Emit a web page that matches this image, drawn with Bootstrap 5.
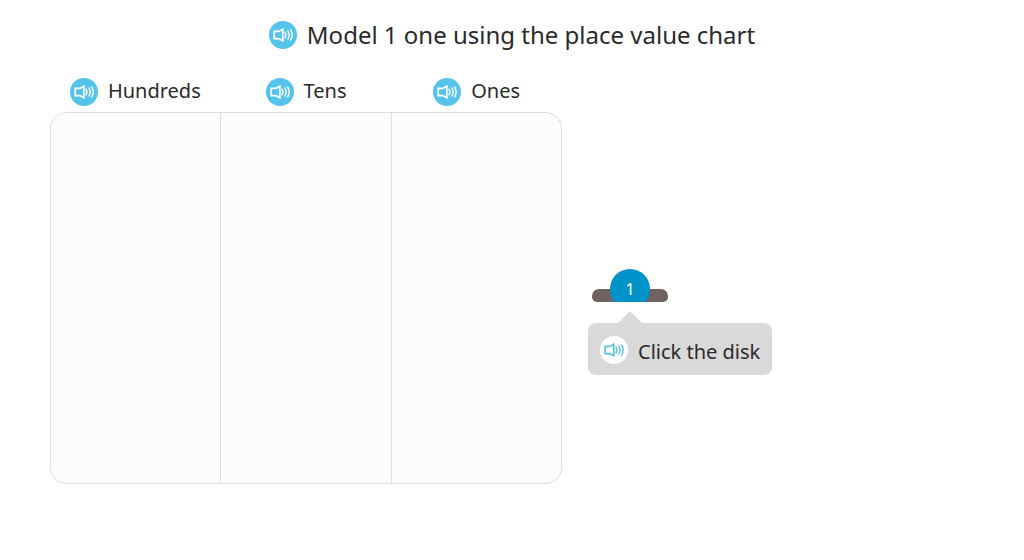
<!DOCTYPE html>
<html lang="en">
<head>
<meta charset="utf-8">
<meta name="viewport" content="width=device-width, initial-scale=1">
<title>Place value chart</title>
<link href="https://cdn.jsdelivr.net/npm/bootstrap@5.3.0/dist/css/bootstrap.min.css" rel="stylesheet">
<style>
  body { font-family: "Noto Sans", sans-serif; color: #2a2a2a; background: #fff; }
  .prompt { gap: 10px; font-size: 24px; line-height: 32px; padding-top: 19px; margin-bottom: 25px; color: #2a2a2a; }
  .spoken { gap: 10px; }
  .label-text { font-size: 20px; line-height: 26px; }
  .speak { width: 28px; height: 28px; background: #56c3ea; color: #fff; }
  .speak-light { background: #fff; color: #56c3ea; }
  .activity { padding-left: 50px; }
  .board { width: 512px; max-width: 60%; }
  .board-head { height: 36px; padding-bottom: 6px; }
  .chart { height: 372px; border: 1px solid #dedede; border-radius: 16px; background: #fcfcfc; }
  .chart > div + div { border-left: 1px solid #dedede; }
  .supply { padding: 193px 0 0 26px; }
  .stand { width: 76px; height: 33px; margin-left: 4px; padding-top: 20px; overflow: hidden; }
  .shelf { height: 13px; border-radius: 7px 7px 5px 5px; background: #706260; }
  .disk { top: 0; left: 18px; width: 40px; height: 40px; background: #0093c9; color: #fff; font-size: 16px; line-height: 40px; }
  .hint { margin-top: 21px; padding: 13px 12px 11px; height: 52px; border-radius: 8px; background: #d9d9d9; }
  .hint-arrow { left: 30px; bottom: 100%; width: 24px; height: 12px; background: #d9d9d9; clip-path: polygon(50% 0, 100% 100%, 0 100%); }
  .hint .label-text { padding-top: 3px; }
</style>
</head>
<body>
<svg class="d-none" aria-hidden="true">
  <symbol id="speaker" viewBox="0 0 28 28">
    <g fill="none" stroke="currentColor" stroke-width="1.7">
      <path d="M5.2 10.4H9.8L13.8 8.2V19.8L9.8 17.6H5.2Z"/>
      <path d="M16 11.2Q17.8 14 16 16.8M18.9 10Q21.3 14 18.9 18M21.6 9Q24.8 14 21.6 19" stroke-width="1.4" stroke-linecap="round"/>
    </g>
  </symbol>
</svg>

<main>
  <h1 class="prompt d-flex justify-content-center align-items-center fw-normal">
    <button type="button" class="speak btn p-0 border-0 rounded-circle d-flex flex-shrink-0" aria-label="Read the question"><svg width="28" height="28"><use href="#speaker"/></svg></button>
    <span>Model 1 one using the place value chart</span>
  </h1>

  <div class="activity d-flex align-items-start">
    <section class="board flex-shrink-0">
      <div class="board-head row g-0 align-items-end">
        <div class="spoken col d-flex justify-content-center">
          <button type="button" class="speak btn p-0 border-0 rounded-circle d-flex" aria-label="Read Hundreds"><svg width="28" height="28"><use href="#speaker"/></svg></button>
          <span class="label-text">Hundreds</span>
        </div>
        <div class="spoken col d-flex justify-content-center">
          <button type="button" class="speak btn p-0 border-0 rounded-circle d-flex" aria-label="Read Tens"><svg width="28" height="28"><use href="#speaker"/></svg></button>
          <span class="label-text">Tens</span>
        </div>
        <div class="spoken col d-flex justify-content-center">
          <button type="button" class="speak btn p-0 border-0 rounded-circle d-flex" aria-label="Read Ones"><svg width="28" height="28"><use href="#speaker"/></svg></button>
          <span class="label-text">Ones</span>
        </div>
      </div>
      <div class="chart row g-0">
        <div class="col"></div>
        <div class="col"></div>
        <div class="col"></div>
      </div>
    </section>

    <section class="supply flex-shrink-0">
      <div class="stand position-relative">
        <div class="shelf"></div>
        <button type="button" class="disk btn position-absolute p-0 border-0 rounded-circle">1</button>
      </div>
      <div class="hint spoken position-relative d-flex">
        <span class="hint-arrow position-absolute"></span>
        <button type="button" class="speak speak-light btn p-0 border-0 rounded-circle d-flex" aria-label="Read the hint"><svg width="28" height="28"><use href="#speaker"/></svg></button>
        <span class="label-text">Click the disk</span>
      </div>
    </section>
  </div>
</main>
<script src="https://cdn.jsdelivr.net/npm/bootstrap@5.3.0/dist/js/bootstrap.bundle.min.js"></script>
</body>
</html>
